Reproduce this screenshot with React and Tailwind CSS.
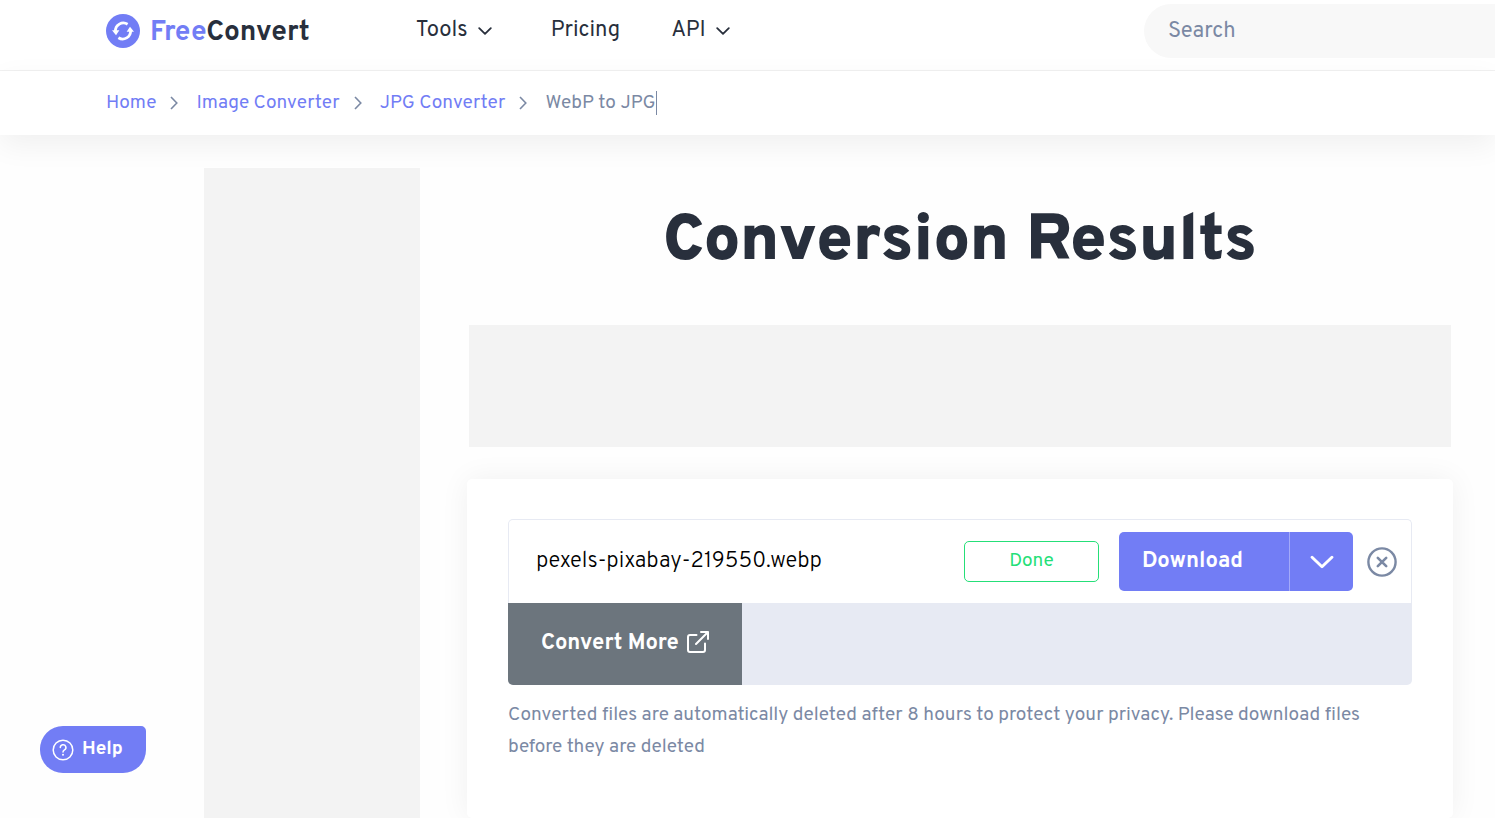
import React, { useState } from 'react'

const breadcrumbs = ['Home', 'Image Converter', 'JPG Converter']

const navItems = [
  { label: 'Tools', hasMenu: true },
  { label: 'Pricing', hasMenu: false },
  { label: 'API', hasMenu: true },
]

const Chevron = ({ className, strokeWidth = 1.8 }) => (
  <svg viewBox="0 0 14 8" fill="none" stroke="currentColor" strokeWidth={strokeWidth} strokeLinecap="round" strokeLinejoin="round" className={className} aria-hidden="true">
    <path d="M1.2 1.2 7 6.8l5.8-5.6" />
  </svg>
)

const ChevronRight = () => (
  <svg viewBox="0 0 8 14" fill="none" stroke="currentColor" strokeWidth="1.6" className="h-[14px] w-2 text-[#7b89a4]" aria-hidden="true">
    <path d="M1 1l5.8 6L1 13" />
  </svg>
)

const Logo = () => (
  <a href="#" className="flex items-center gap-[10px]">
    <svg viewBox="0 0 34 34" className="size-[34px]" aria-hidden="true">
      <circle cx="17" cy="17" r="17" fill="#727df5" />
      <g fill="none" stroke="#fff" strokeWidth="2.8">
        <path d="M21.6 10.2A8 8 0 0 0 9.4 17.4" />
        <path d="M12.4 23.8A8 8 0 0 0 24.600 16.600" />
      </g>
      <path d="M6 16.200h7.400l-3.400 5z" fill="#fff" />
      <path d="M28 17.800h-7.400l3.400-5z" fill="#fff" />
    </svg>
    <span className="pt-1 text-[28px] leading-8 font-bold text-[#282f3c]">
      <span className="text-[#727df5]">Free</span>Convert
    </span>
  </a>
)

const Header = () => (
  <header className="flex items-center border-b border-[#f1f1f1] bg-white pt-1 pb-3 pl-[106px]">
    <Logo />
    <nav className="ml-[106px] flex items-center gap-[51px] text-[22px] leading-7 text-[#282f3c]">
      {navItems.map((item) => (
        <a key={item.label} href="#" className={item.hasMenu ? 'flex items-center gap-[10px] pr-2' : 'flex items-center'}>
          {item.label}
          {item.hasMenu && <Chevron className="h-2 w-[14px]" />}
        </a>
      ))}
    </nav>
    <input
      type="search"
      placeholder="Search"
      aria-label="Search"
      className="ml-auto h-[54px] w-[351px] rounded-l-full bg-[#f8f8f8] px-6 text-[22px] text-[#282f3c] outline-none placeholder:text-[#7b89a4]"
    />
  </header>
)

const Breadcrumbs = () => (
  <nav aria-label="Breadcrumb" className="relative bg-white py-[18px] pl-[106px] shadow-[0_10px_30px_rgba(0,0,0,0.06)]">
    <ol className="flex items-center text-[19px] leading-7">
      {breadcrumbs.map((label) => (
        <li key={label} className="flex items-center">
          <a href="#" className="text-[#727df5]">{label}</a>
          <span className="mr-[18px] ml-[14px]">
            <ChevronRight />
          </span>
        </li>
      ))}
      <li className="border-r border-[#7b89a4] leading-6 text-[#7b89a4]">WebP to JPG</li>
    </ol>
  </nav>
)

const FileRow = ({ name, onRemove }) => (
  <div className="flex items-center rounded-t-[5px] border border-b-0 border-[#e7eaf3] py-3 pr-[14px] pl-[27px]">
    <span className="flex-1 text-[22px] leading-7 font-light text-black">{name}</span>
    <span className="mr-5 w-[135px] rounded-[5px] border border-[#25df78] pt-[5px] pb-[6px] text-center text-[19px] leading-7 text-[#25df78]">Done</span>
    <div className="mr-[14px] flex h-[59px] overflow-hidden rounded-[5px] bg-[#727df5] text-white">
      <button type="button" className="w-[170px] pl-[23px] text-left text-[22px] leading-7 font-bold">Download</button>
      <button type="button" aria-label="More download options" className="flex w-16 items-center justify-center border-l border-[#a3aafa]">
        <Chevron className="h-[14px] w-6" strokeWidth={1.7} />
      </button>
    </div>
    <button type="button" aria-label="Remove file" onClick={onRemove} className="text-[#7b89a4]">
      <svg viewBox="0 0 30 30" fill="none" stroke="currentColor" strokeLinecap="round" className="size-[30px]" aria-hidden="true">
        <circle cx="15" cy="15" r="13.6" strokeWidth="2.4" />
        <path d="M10.8 10.8l8.4 8.4M19.2 10.8l-8.4 8.4" strokeWidth="2.6" />
      </svg>
    </button>
  </div>
)

const App = () => {
  const [files, setFiles] = useState(['pexels-pixabay-219550.webp'])

  const removeFile = (name) => setFiles(files.filter((file) => file !== name))

  return (
    <div className="flex min-h-screen flex-col overflow-hidden bg-[#fefefe] font-[Overpass,Roboto,sans-serif]">
      <Header />
      <Breadcrumbs />

      <main className="flex flex-1 pr-[42px] pl-[204px]">
        {/* Left ad slot */}
        <aside className="mt-[33px] w-[216px] shrink-0 bg-[#f3f3f3]"></aside>

        <section className="ml-[47px] flex min-w-0 flex-1 flex-col">
          <h1 className="mt-[70px] text-center text-[65px] leading-[76px] font-black text-[#282f3c]">Conversion Results</h1>

          {/* Banner ad slot */}
          <div className="mx-[2px] mt-11 h-[122px] bg-[#f3f3f3]"></div>

          <div className="mt-8 flex-1 rounded-[5px] bg-white px-[41px] pt-10 shadow-[0_0_30px_rgba(0,0,0,0.06)]">
            {files.map((name) => (
              <FileRow key={name} name={name} onRemove={() => removeFile(name)} />
            ))}
            <div className="overflow-hidden rounded-b-[5px] bg-[#e7eaf3]">
              <button type="button" className="flex h-[82px] w-[234px] items-center gap-2 bg-[#6c757d] pb-1 pl-[33px] text-[22px] leading-7 font-bold text-white">
                <span className="pt-1">Convert More</span>
                <svg viewBox="0 0 22 22" fill="none" stroke="currentColor" strokeWidth="2" strokeLinecap="round" strokeLinejoin="round" className="size-[22px]" aria-hidden="true">
                  <path d="M9.5 4H3a2 2 0 0 0-2 2v13a2 2 0 0 0 2 2h13a2 2 0 0 0 2-2v-6.500" />
                  <path d="M14 1h7v7M21 1 9 13" />
                </svg>
              </button>
            </div>
            <p className="mt-[14px] text-[19px] leading-8 text-[#7b89a4]">
              Converted files are automatically deleted after 8 hours to protect your privacy. Please download files before they are deleted
            </p>
          </div>
        </section>
      </main>

      <button type="button" className="fixed bottom-[45px] left-10 flex h-[47px] w-[106px] items-center gap-2 rounded-[23px] rounded-tr-[5px] bg-[#727df5] pl-3 text-[19px] font-bold text-white">
        <svg viewBox="0 0 22 22" fill="none" stroke="currentColor" strokeWidth="1.5" strokeLinecap="round" className="size-[22px]" aria-hidden="true">
          <circle cx="11" cy="11" r="9.8" />
          <path d="M8.300 8.500a2.800 2.800 0 1 1 4.200 2.400c-1 .6-1.500 1-1.500 2.200" />
          <path d="M11 15.700v.1" strokeWidth="2" />
        </svg>
        Help
      </button>
    </div>
  )
}

export default App
